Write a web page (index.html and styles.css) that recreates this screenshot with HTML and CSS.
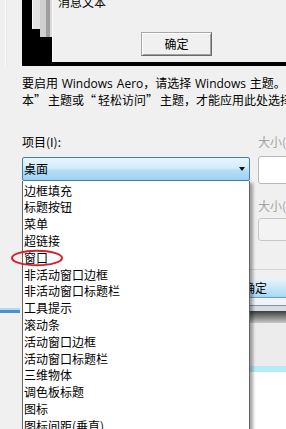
FILE: index.html
```html
<!DOCTYPE html>
<html lang="zh-CN">
<head>
<meta charset="utf-8">
<title>窗口颜色和外观</title>
<link rel="stylesheet" href="styles.css">
</head>
<body>
<div class="preview">
  <div class="gutter"></div>
  <div class="desk">
    <div class="win win1"></div>
    <div class="win win2"></div>
    <div class="msgbox">
      <div class="msgtext">消息文本</div>
      <div class="okbtn">确定</div>
    </div>
  </div>
</div>
<div class="main">
  <div class="aside"><div class="bluebar"></div></div>
  <div class="content">
    <p class="desc">要启用 <span class="en">Windows Aero</span>，请选择 <span class="en">Windows</span> 主题。只有选择了“Windows 7 基<br>本<span class="q">”</span>主题或<span class="q">“</span>轻松访问<span class="q">”</span>主题，才能应用此处选择的颜色、字体和大小。</p>
    <div class="form">
      <div class="col-left">
        <div class="label">项目(I):</div>
        <div class="combo">
          <span class="combo-text">桌面</span>
          <span class="arrow"></span>
          <ul class="list">
            <li>边框填充</li>
            <li>标题按钮</li>
            <li>菜单</li>
            <li>超链接</li>
            <li class="marked">窗口<svg class="ring" width="54" height="18" viewBox="0 0 54 18"><ellipse cx="27" cy="9" rx="25" ry="7.2" /></svg></li>
            <li>非活动窗口边框</li>
            <li>非活动窗口标题栏</li>
            <li>工具提示</li>
            <li>滚动条</li>
            <li>活动窗口边框</li>
            <li>活动窗口标题栏</li>
            <li>三维物体</li>
            <li>调色板标题</li>
            <li>图标</li>
            <li>图标间距(垂直)</li>
          </ul>
        </div>
      </div>
      <div class="col-right">
        <div class="label dim">大小(Z):</div>
        <div class="box"></div>
        <div class="label dim label2">大小(E):</div>
        <div class="box box-off"></div>
        <div class="sep"></div>
        <div class="dlgbtn">确定</div>
        <div class="lower">
          <div class="l1"></div>
          <div class="l2"></div>
          <div class="l3"></div>
          <div class="l4"></div>
          <div class="l5"></div>
          <div class="l6"></div>
        </div>
      </div>
    </div>
  </div>
</div>
</body>
</html>
```

FILE: styles.css
```css
html, body {
  margin: 0;
  padding: 0;
}
body {
  background: #f0f0f0;
  font-family: "Noto Sans CJK SC", "Microsoft YaHei", sans-serif;
  font-size: 12px;
  line-height: 16px;
  color: #000;
  overflow: hidden;
  width: 286px;
  height: 429px;
}

/* preview */
.preview {
  display: flex;
  height: 66px;
}
.gutter {
  width: 22px;
  flex: none;
  background: linear-gradient(to right, #f0f0f0 5px, #fcfcfc 5px 6px, #e6e6e6 6px 7px, #f0f0f0 7px);
}
.desk {
  flex: 1;
  min-width: 0;
  background: #000;
  display: flex;
  align-items: flex-start;
  padding-left: 10px;
}
.win {
  flex: none;
}
.win1 {
  width: 8px;
  height: 29px;
  background: #e2e2e2;
  box-shadow: inset 1px 0 #fafafa;
}
.win2 {
  width: 12px;
  height: 37px;
  background: linear-gradient(to right, #cfcfcf 0 6px, #9e9e9e 6px 10px, #d8d8d8 10px);
}
.msgbox {
  flex: 1;
  min-width: 0;
  height: 62px;
  box-sizing: border-box;
  background: #f0f0f0;
  border-left: 1px solid #fdfdfd;
  padding-left: 5px;
  overflow: hidden;
}
.msgtext {
  margin-top: -6px;
  white-space: nowrap;
}
.okbtn {
  margin: 22px 0 0 83px;
  width: 71px;
  height: 24px;
  box-sizing: border-box;
  border: 1px solid;
  border-color: #a8a8a8 #6a6a6a #6a6a6a #a8a8a8;
  box-shadow: inset 1px 1px #fff, inset -1px -1px #a0a0a0;
  display: flex;
  align-items: center;
  justify-content: center;
}

/* main */
.main {
  display: flex;
}
.aside {
  width: 22px;
  flex: none;
}
.bluebar {
  margin-top: 242px;
  width: 20px;
  height: 5px;
  background: linear-gradient(#b4d8f4 0 2px, #4d90d0 2px);
}
.content {
  flex: 1;
  min-width: 0;
}
.desc {
  margin: 0;
  padding-top: 9px;
  white-space: nowrap;
  word-spacing: 1px;
}
.en {
  font-family: "Open Sans", "Noto Sans CJK SC", sans-serif;
}
.q {
  letter-spacing: 2px;
}
.form {
  display: flex;
  gap: 8px;
  margin-top: 26px;
}
.label {
  white-space: nowrap;
}
.dim {
  color: #a3a3a3;
}
.col-left {
  width: 228px;
  flex: none;
}
.combo {
  position: relative;
  margin-top: 7px;
  height: 24px;
  box-sizing: border-box;
  border: 1px solid #3c7fb1;
  border-radius: 2px;
  background: linear-gradient(#e9f5fd, #d3ecfa 45%, #b6dff7 55%, #9fd1f1);
  display: flex;
  align-items: center;
  padding-left: 1px;
}
.arrow {
  margin-left: auto;
  margin-right: 4px;
  width: 0;
  height: 0;
  border-top: 4px solid #111;
  border-left: 3.5px solid transparent;
  border-right: 3.5px solid transparent;
}
.list {
  position: absolute;
  z-index: 2;
  top: calc(100% + 1px);
  left: -1px;
  right: -1px;
  height: 260px;
  box-sizing: border-box;
  margin: 0;
  padding: 1.6px 0 0;
  list-style: none;
  background: #fff;
  border: 1px solid #646464;
  border-top: none;
  box-shadow: 3px 2px 3px rgba(0, 0, 0, 0.35);
}
.list li {
  line-height: 16.8px;
  padding-left: 1px;
  white-space: nowrap;
}
.marked {
  position: relative;
}
.ring {
  position: absolute;
  left: -13px;
  top: -1px;
  overflow: visible;
}
.ring ellipse {
  fill: none;
  stroke: #cf2129;
  stroke-width: 2;
}

/* right column */
.col-right {
  width: 120px;
  flex: none;
}
.box {
  margin-top: 6px;
  height: 28px;
  box-sizing: border-box;
  border: 1px solid #bababa;
  border-radius: 3px;
  background: #fff;
}
.label2 {
  margin-top: 14px;
}
.box-off {
  margin-top: 4px;
  height: 23px;
  border-color: #c6c6c6;
  background: #f3f3f3;
}
.sep {
  margin-top: 28px;
  margin-left: -48px;
  height: 1px;
  background: #d6d6d6;
}
.dlgbtn {
  margin-top: 9px;
  margin-left: -48px;
  padding-left: 33px;
  height: 19px;
  box-sizing: border-box;
  line-height: 18px;
  background: linear-gradient(#e6f4fc, #c9e7f8 50%, #a8d7f3);
  border-bottom: 1px solid #6d9ec5;
  white-space: nowrap;
}
.lower {
  margin-left: -48px;
}
.l1 {
  height: 7px;
  background: #eef4fa;
  border-bottom: 1px solid #8e8e8e;
}
.l2 {
  height: 5px;
  background: #d6dde4;
}
.l3 {
  height: 12px;
  background: linear-gradient(#3d3d3d, #c8c8c8);
}
.l4 {
  height: 43px;
  background: #ececec;
}
.l5 {
  height: 6px;
  background: #b6ecf3;
}
.l6 {
  height: 80px;
  background: #fff;
}
```
